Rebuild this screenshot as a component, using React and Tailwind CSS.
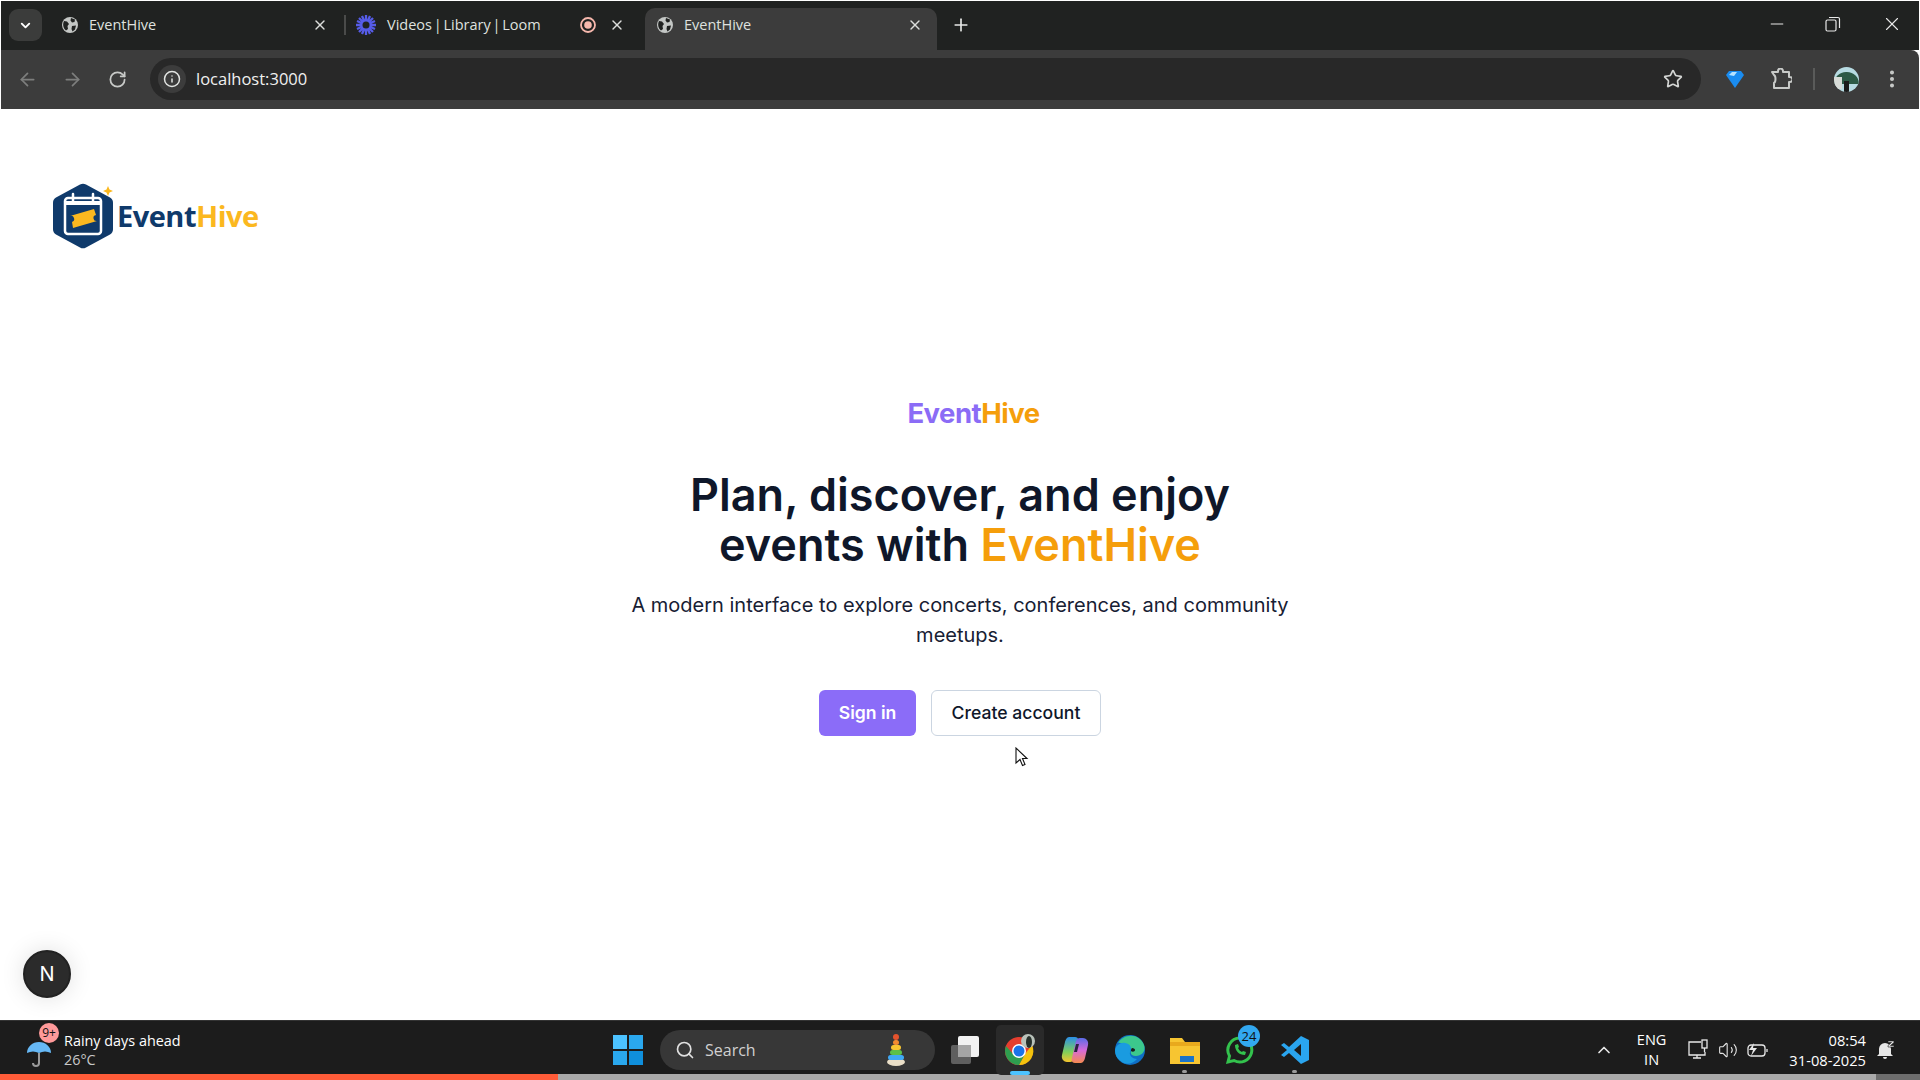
import React from 'react';
import { ArrowLeft, ArrowRight, RotateCw, Info, Star, EllipsisVertical, ChevronDown, ChevronUp, X, Plus, Minus, Search, Volume2 } from 'lucide-react';

const Globe = () => (
  <svg viewBox="0 0 16 16" className="w-[16px] h-[16px] shrink-0">
    <circle cx="8" cy="8" r="8" fill="#c4c7c5" />
    <path d="M2 4l3 .5L7 7 5.500 9 6 12l-2 1.500C1 11 .5 7 2 4zM9 1l4 1.500-.5 2.500L10 5.500 8.500 3.500zM10 9l4-.5-1 4-2.500 2L9.500 12z" fill="#202221" />
  </svg>
);

const Tab = ({ icon, title, right, active, cls }) => (
  <div className={`relative flex items-center h-[42px] pb-[8px] ${cls} ${active ? 'bg-[#3c3c3c] rounded-t-[10px]' : ''}`}>
    {icon}
    <span className="ml-[11px] text-[14.5px] [word-spacing:-2px] text-[#dfe1df] whitespace-nowrap">{title}</span>
    <span className="flex-1" />
    {right}
    <X size={16} strokeWidth={2} className="text-[#dcdedc] shrink-0" />
  </div>
);

const LoomIcon = () => (
  <svg viewBox="0 0 20 20" className="w-[20px] h-[20px] shrink-0">
    <g stroke="#565ce8" strokeWidth="2.300">
      <path d="M10 0v20M0 10h20M3 3l14 14M17 3L3 17M6 1l8 18M14 1L6 19M1 6l18 8M19 6L1 14" />
    </g>
    <circle cx="10" cy="10" r="3.500" fill="#202221" />
  </svg>
);

const RecordIcon = () => (
  <svg viewBox="0 0 16 16" className="w-[16px] h-[16px] shrink-0 mr-[13px]">
    <circle cx="8" cy="8" r="7" fill="none" stroke="#f6b8ad" strokeWidth="1.800" />
    <circle cx="8" cy="8" r="3.800" fill="#f6b8ad" />
  </svg>
);

const BrowserChrome = () => (
  <div className="shrink-0 px-px pt-px font-['Open_Sans',sans-serif]">
    <div className="flex items-end h-[49px] bg-[#202221]">
      <div className="flex items-center justify-center w-[33px] h-[32px] ml-[8px] mb-[9px] bg-[#3b3c3b] rounded-[9px]">
        <ChevronDown size={15} strokeWidth={3} className="text-white" />
      </div>
      <div className="flex ml-[8px]">
        <Tab icon={<Globe />} title="EventHive" cls="w-[294px] pl-[12px] pr-[16px]" />
      </div>
      <div className="w-[2px] h-[20px] bg-[#4a4b4a] mb-[15px]" />
      <div className="flex">
        <Tab icon={<LoomIcon />} title="Videos | Library | Loom" right={<RecordIcon />} cls="w-[299px] pl-[10px] pr-[20px]" />
        <Tab icon={<Globe />} title="EventHive" cls="w-[292px] pl-[12px] pr-[14px]" active />
      </div>
      <Plus size={20} strokeWidth={2} className="text-[#e6e8e6] ml-[14px] mb-[15px]" />
      <div className="flex-1" />
      <div className="flex items-center mb-[15px] mr-[16px] text-[#e8e8e8]">
        <Minus size={20} strokeWidth={1.200} />
        <svg viewBox="0 0 16 16" className="w-[16px] h-[16px] ml-[38px]" fill="none" stroke="currentColor" strokeWidth="1.200">
          <rect x="1" y="4" width="10" height="11" rx="1.500" />
          <path d="M4 1.500h9a1.500 1.500 0 0 1 1.500 1.500v9" />
        </svg>
        <X size={22} strokeWidth={1.200} className="ml-[40px]" />
      </div>
    </div>
    <div className="flex items-center h-[59px] pb-px bg-[#3c3c3c] rounded-tr-[8px] pl-[16px] pr-[16px]">
      <ArrowLeft size={21} className="text-[#7d7e7d]" />
      <ArrowRight size={21} className="text-[#7d7e7d] ml-[24px]" />
      <RotateCw size={19} strokeWidth={2.200} className="text-[#c8cac8] ml-[25px]" />
      <div className="flex items-center flex-1 h-[42px] ml-[23px] bg-[#282828] rounded-full pl-[8px] pr-[18px]">
        <div className="flex items-center justify-center w-[28px] h-[28px] rounded-full bg-[#3c3c3c]">
          <Info size={18} className="text-[#e2e4e2]" />
        </div>
        <span className="ml-[10px] text-[16.5px] text-[#f0f0f0]">localhost:3000</span>
        <span className="flex-1" />
        <Star size={20} strokeWidth={2} className="text-[#d4d6d4]" />
      </div>
      <svg viewBox="0 0 20 20" className="w-[20px] h-[20px] ml-[24px]">
        <path d="M1 6l3-4h12l3 4-9 13z" fill="#1a8cf0" />
        <path d="M4 6l3-3h5L9 7z" fill="#b6e2ff" />
      </svg>
      <svg viewBox="0 0 22 22" className="w-[22px] h-[22px] ml-[25px]" fill="none" stroke="#c8cac8" strokeWidth="2" strokeLinejoin="round">
        <path d="M2 4h6V3a2.500 2.500 0 0 1 5 0v1h6v5h1a2.500 2.500 0 0 1 0 5h-1v6H4v-5c2-1 2-7 0-8z" />
      </svg>
      <div className="w-[2px] h-[22px] bg-[#5a5b5a] ml-[21px]" />
      <div className="relative w-[25px] h-[25px] rounded-full overflow-hidden ml-[19px] bg-[#b7dbe2]">
        <div className="absolute left-0 top-[5px] w-[25px] h-[12px] bg-[#2d5a46] rounded-t-full" />
        <div className="absolute left-0 top-[10px] w-[8px] h-[12px] bg-[#d8dcd8]" />
        <div className="absolute left-[10px] top-[14px] w-[5px] h-[11px] bg-[#1b1b1b]" />
      </div>
      <EllipsisVertical size={22} strokeWidth={2.400} className="text-[#c8cac8] ml-[22px]" />
    </div>
  </div>
);

const LogoMark = () => (
  <svg viewBox="0 0 66 66" className="w-[66px] h-[66px] shrink-0">
    <path d="M27 1.500a6 6 0 0 1 6 0l24 13a6 6 0 0 1 3 5.200v26.600a6 6 0 0 1-3 5.200l-24 13a6 6 0 0 1-6 0l-24-13a6 6 0 0 1-3-5.200V19.700a6 6 0 0 1 3-5.200z" fill="#0f3a6b" />
    <rect x="12" y="15" width="36" height="36" rx="3" fill="#0f3a6b" stroke="#ffffff" strokeWidth="2.500" />
    <path d="M12.500 20h35" stroke="#ffffff" strokeWidth="4" />
    <path d="M20 11v7M40 11v7" stroke="#ffffff" strokeWidth="2.500" strokeLinecap="round" />
    <path d="M17 33l24-7 2 6a3 3 0 0 0 1 6l-24 7-1-6a3 3 0 0 0-2-6z" fill="#fbb81f" />
    <path d="M55 3l1.500 3.500L60 8l-3.500 1.500L55 13l-1.500-3.500L50 8l3.500-1.500z" fill="#fbb81f" />
  </svg>
);

const Hero = () => (
  <div className="flex flex-col items-center font-['Inter',sans-serif]">
    <div className="text-[27.5px] leading-[36px] font-bold tracking-[-0.5px] ml-[27px]">
      <span className="text-[#8b6cf6]">Event</span><span className="text-[#f59e0b]">Hive</span>
    </div>
    <h1 className="mt-[39px] text-[45px] leading-[50px] font-semibold text-[#0f172a] text-center">
      Plan, discover, and enjoy<br />events with <span className="text-[#f59e0b]">EventHive</span>
    </h1>
    <p className="mt-[20px] w-[672px] text-[20px] leading-[30px] text-[#172033] text-center">
      A modern interface to explore concerts, conferences, and community meetups.
    </p>
    <div className="flex gap-[15px] mt-[40px]">
      <button className="w-[97px] h-[46px] rounded-[6px] bg-[#8b6cf8] text-white text-[17.6px] font-semibold">Sign in</button>
      <button className="relative w-[170px] h-[46px] rounded-[6px] border border-[#cbd5e1] bg-white text-[#0f172a] text-[17.6px] font-medium">
        Create account
        <svg viewBox="0 0 14 20" className="absolute left-[83px] top-[56px] w-[14px] h-[20px]">
          <path d="M1 1v15l4-3.500 2.500 6 2.500-1-2.500-6H12z" fill="#ffffff" stroke="#111111" strokeWidth="1.100" />
        </svg>
      </button>
    </div>
  </div>
);

const Taskbar = () => (
  <div className="shrink-0 font-['Open_Sans',sans-serif]">
    <div className="flex items-center h-[54px] pt-[4px] bg-[#1c1c1c] border-t border-[#333]">
      <div className="relative flex items-center ml-[26px] w-[196px]">
        <svg viewBox="0 0 26 28" className="w-[26px] h-[28px] mt-[8px] shrink-0">
          <path d="M1 13a12 11 0 0 1 24 0c-4-2-8-2-12 0-4-2-8-2-12 0z" fill="#66b8f5" />
          <path d="M13 13v10a3 3 0 0 1-6 0" fill="none" stroke="#9a9a9a" strokeWidth="2" />
        </svg>
        <div className="absolute left-[13px] -top-[8px] w-[20px] h-[20px] rounded-full bg-[#ff9a9a] text-[#111] text-[12px] leading-[20px] text-center">9+</div>
        <div className="ml-[12px] text-[14.4px] leading-[19px] text-white whitespace-nowrap">
          <div>Rainy days ahead</div>
          <div className="text-[#c8c8c8]">26°C</div>
        </div>
      </div>
      <div className="flex items-center ml-[391px]">
        <svg viewBox="0 0 30 30" className="w-[30px] h-[30px] shrink-0">
          <rect x="0" y="0" width="14" height="14" fill="#4cc2ff" />
          <rect x="16" y="0" width="14" height="14" fill="#2aa8ee" />
          <rect x="0" y="16" width="14" height="14" fill="#2aa8ee" />
          <rect x="16" y="16" width="14" height="14" fill="#0f8fdc" />
        </svg>
        <div className="flex items-center w-[275px] h-[40px] ml-[17px] bg-[#373737] rounded-full pl-[15px] pr-[29px]">
          <Search size={20} className="text-[#e0e0e0]" />
          <span className="ml-[10px] text-[16px] text-[#d0d0d0]">Search</span>
          <span className="flex-1" />
          <svg viewBox="0 0 20 32" className="w-[20px] h-[32px]">
            <ellipse cx="10" cy="28" rx="9" ry="4" fill="#eadfc8" />
            <rect x="2" y="21" width="16" height="5" rx="2.500" fill="#3fa9f5" />
            <rect x="4" y="16" width="12" height="5" rx="2.500" fill="#5cc04a" />
            <rect x="5" y="11" width="10" height="5" rx="2.500" fill="#f7c531" />
            <rect x="7" y="6" width="6" height="5" rx="2.500" fill="#f28a30" />
            <circle cx="10" cy="3" r="3" fill="#e5532d" />
          </svg>
        </div>
        <svg viewBox="0 0 30 30" className="w-[30px] h-[30px] ml-[15px]">
          <rect x="1" y="10" width="20" height="19" rx="2" fill="#5f5f5f" />
          <rect x="8" y="1" width="21" height="21" rx="2" fill="#f2f2f2" />
          <rect x="8" y="10" width="13" height="12" fill="#a5a5a5" />
        </svg>
        <div className="relative flex items-center justify-center w-[48px] h-[50px] ml-[16px] bg-[#2a2a2a] rounded-[5px]">
          <svg viewBox="0 0 32 32" className="w-[32px] h-[32px]">
            <circle cx="15" cy="17" r="14" fill="#e53e2f" />
            <path d="M28 11a14 14 0 0 1-13 20l6-11z" fill="#f4c20d" />
            <path d="M3 24a14 14 0 0 0 12 7l6-11H9z" fill="#2e9e4f" />
            <path d="M3 24a14 14 0 0 1-1-12l7 8h6l-3 11z" fill="#2e9e4f" />
            <circle cx="15" cy="17" r="7" fill="#fff" />
            <circle cx="15" cy="17" r="5.500" fill="#1a73e8" />
            <circle cx="24" cy="7" r="7" fill="#b9c2ba" />
            <ellipse cx="25" cy="8" rx="3" ry="6" fill="#26302b" />
          </svg>
          <div className="absolute bottom-0 w-[20px] h-[4px] rounded-full bg-[#4cc2ff]" />
        </div>
        <svg viewBox="0 0 30 30" className="w-[30px] h-[30px] ml-[16px]">
          <defs>
            <linearGradient id="copl" x1="0" y1="0" x2="0" y2="1">
              <stop offset="0" stopColor="#2b8fe8" />
              <stop offset="0.600" stopColor="#7fd05a" />
              <stop offset="1" stopColor="#f6c52e" />
            </linearGradient>
            <linearGradient id="copr" x1="0" y1="0" x2="0" y2="1">
              <stop offset="0" stopColor="#5a6be8" />
              <stop offset="0.500" stopColor="#d86ad8" />
              <stop offset="1" stopColor="#f58a50" />
            </linearGradient>
          </defs>
          <path d="M9 2h6c2 0 3 1 3.500 3L14 24c-.5 2-2 3-4 3H7c-3 0-6-3-5-7L5 7c.5-2 2-5 4-5z" fill="url(#copl)" />
          <path d="M21 28h-6c-2 0-3-1-3.500-3L16 6c.5-2 2-3 4-3h3c3 0 6 3 5 7l-3 13c-.5 2-2 5-4 5z" fill="url(#copr)" />
          <path d="M16 9l3 0-2 8-3 0z" fill="#2a2440" />
        </svg>
        <svg viewBox="0 0 30 30" className="w-[30px] h-[30px] ml-[25px]">
          <circle cx="15" cy="15" r="15" fill="#0f6fc6" />
          <path d="M3 8C8-1 24-3 29 10c2 6-2 11-8 11-4 0-6-2-5-5 2-5-10-9-13-8z" fill="#3cc88c" />
          <path d="M0 15c1-5 6-8 10-7 6 1 7 5 5 9-1 4 3 7 7 7-4 5-11 6-15 3-5-3-7-7-7-12z" fill="#1a9be0" />
          <path d="M17 13c2 0 3 1 3 2 0 2-3 2-4 1 0-1 0-2 1-3z" fill="#1c1c1c" />
        </svg>
        <div className="relative ml-[25px]">
          <svg viewBox="0 0 30 30" className="w-[30px] h-[30px]">
            <path d="M0 3h12l3 4h15v22H0z" fill="#f7c531" />
            <rect x="0" y="7" width="30" height="4" fill="#e8a91d" />
            <rect x="10" y="21" width="14" height="6" fill="#1a73c8" />
          </svg>
          <div className="absolute left-[12px] -bottom-[8px] w-[5px] h-[3px] rounded-full bg-[#9a9a9a]" />
        </div>
        <div className="relative ml-[25px]">
          <svg viewBox="0 0 30 30" className="w-[30px] h-[30px]">
            <path d="M15 3a12 12 0 1 1-6 22.500L3 27l1.500-6A12 12 0 0 1 15 3z" fill="none" stroke="#33c24d" strokeWidth="3" />
            <path d="M10 10c0 6 4 10 10 10l1-3-3-1-1 1c-2-1-3-2-4-4l1-1-1-3z" fill="#33c24d" />
          </svg>
          <div className="absolute left-[13px] -top-[10px] w-[22px] h-[22px] rounded-full bg-[#32a8f0] text-[#111] text-[13px] leading-[22px] text-center">24</div>
        </div>
        <div className="relative ml-[25px]">
          <svg viewBox="0 0 30 30" className="w-[30px] h-[30px]">
            <path d="M21 1l8 4v20l-8 4L9 18l-5 4-3-2 6-5-6-5 3-2 5 4z" fill="#2aa5ef" />
            <path d="M21 9l-7 6 7 6z" fill="#1c1c1c" />
          </svg>
          <div className="absolute left-[12px] -bottom-[8px] w-[5px] h-[3px] rounded-full bg-[#9a9a9a]" />
        </div>
      </div>
      <div className="flex-1" />
      <div className="flex items-center mr-[24px] text-white">
        <ChevronUp size={20} strokeWidth={2} className="text-[#e8e8e8]" />
        <div className="ml-[23px] text-[14.5px] leading-[20px] text-center">ENG<br />IN</div>
        <svg viewBox="0 0 22 22" className="w-[22px] h-[22px] ml-[21px]" fill="none" stroke="#e8e8e8" strokeWidth="1.300">
          <path d="M14 3H2v13h16v-3M6 19h8M10 16v3" />
          <rect x="15" y="1" width="5" height="8" />
          <path d="M17.500 9v4" />
        </svg>
        <Volume2 size={20} strokeWidth={1.300} className="text-[#e8e8e8] ml-[9px]" />
        <svg viewBox="0 0 22 18" className="w-[22px] h-[18px] ml-[9px]" fill="none" stroke="#e8e8e8" strokeWidth="1.300">
          <rect x="1" y="4" width="17" height="11" rx="3" />
          <path d="M20 8v3" />
          <path d="M7 2L2 9h4l-2 6 6-8H6z" fill="#e8e8e8" stroke="none" />
        </svg>
        <div className="ml-[20px] text-[14.7px] leading-[20px] text-right">08:54<br />31-08-2025</div>
        <svg viewBox="0 0 20 20" className="w-[20px] h-[20px] ml-[10px]" fill="#e8e8e8">
          <path d="M9 3a6 6 0 0 1 6 6v5l2 2H1l2-2V9a6 6 0 0 1 6-6zM7 17h4a2 2 0 0 1-4 0z" />
          <path d="M12 1h6v1.500l-3.500 3H18V7h-6V5.500l3.500-3H12z" stroke="#1c1c1c" strokeWidth="0.600" />
        </svg>
      </div>
    </div>
    <div className="flex h-[6px] bg-[#a9a9a9]">
      <div className="w-[558px] bg-[#ff5c39]" />
      <div className="flex-1" />
      <div className="w-[44px] bg-[#6d6d6d]" />
    </div>
  </div>
);

export default function App() {
  return (
    <div className="flex flex-col w-[1920px] h-[1080px] overflow-hidden bg-white">
      <BrowserChrome />
      <div className="relative flex-1 flex flex-col">
        <div className="flex items-center pl-[53px] pt-[74px]">
          <LogoMark />
          <span className="-ml-[2px] font-['Open_Sans',sans-serif] text-[29px] font-bold tracking-[-0.5px]">
            <span className="text-[#0f3a6b]">Event</span><span className="text-[#fbb81f]">Hive</span>
          </span>
        </div>
        <div className="mt-[146px]">
          <Hero />
        </div>
        <div className="absolute left-[23px] bottom-[22px] flex items-center justify-center w-[48px] h-[48px] rounded-full bg-[#2b2b2b] border-2 border-[#222] shadow-[0_0_24px_rgba(0,0,0,0.12)] text-white text-[20px] font-['Inter',sans-serif]">
          N
        </div>
      </div>
      <Taskbar />
    </div>
  );
}
